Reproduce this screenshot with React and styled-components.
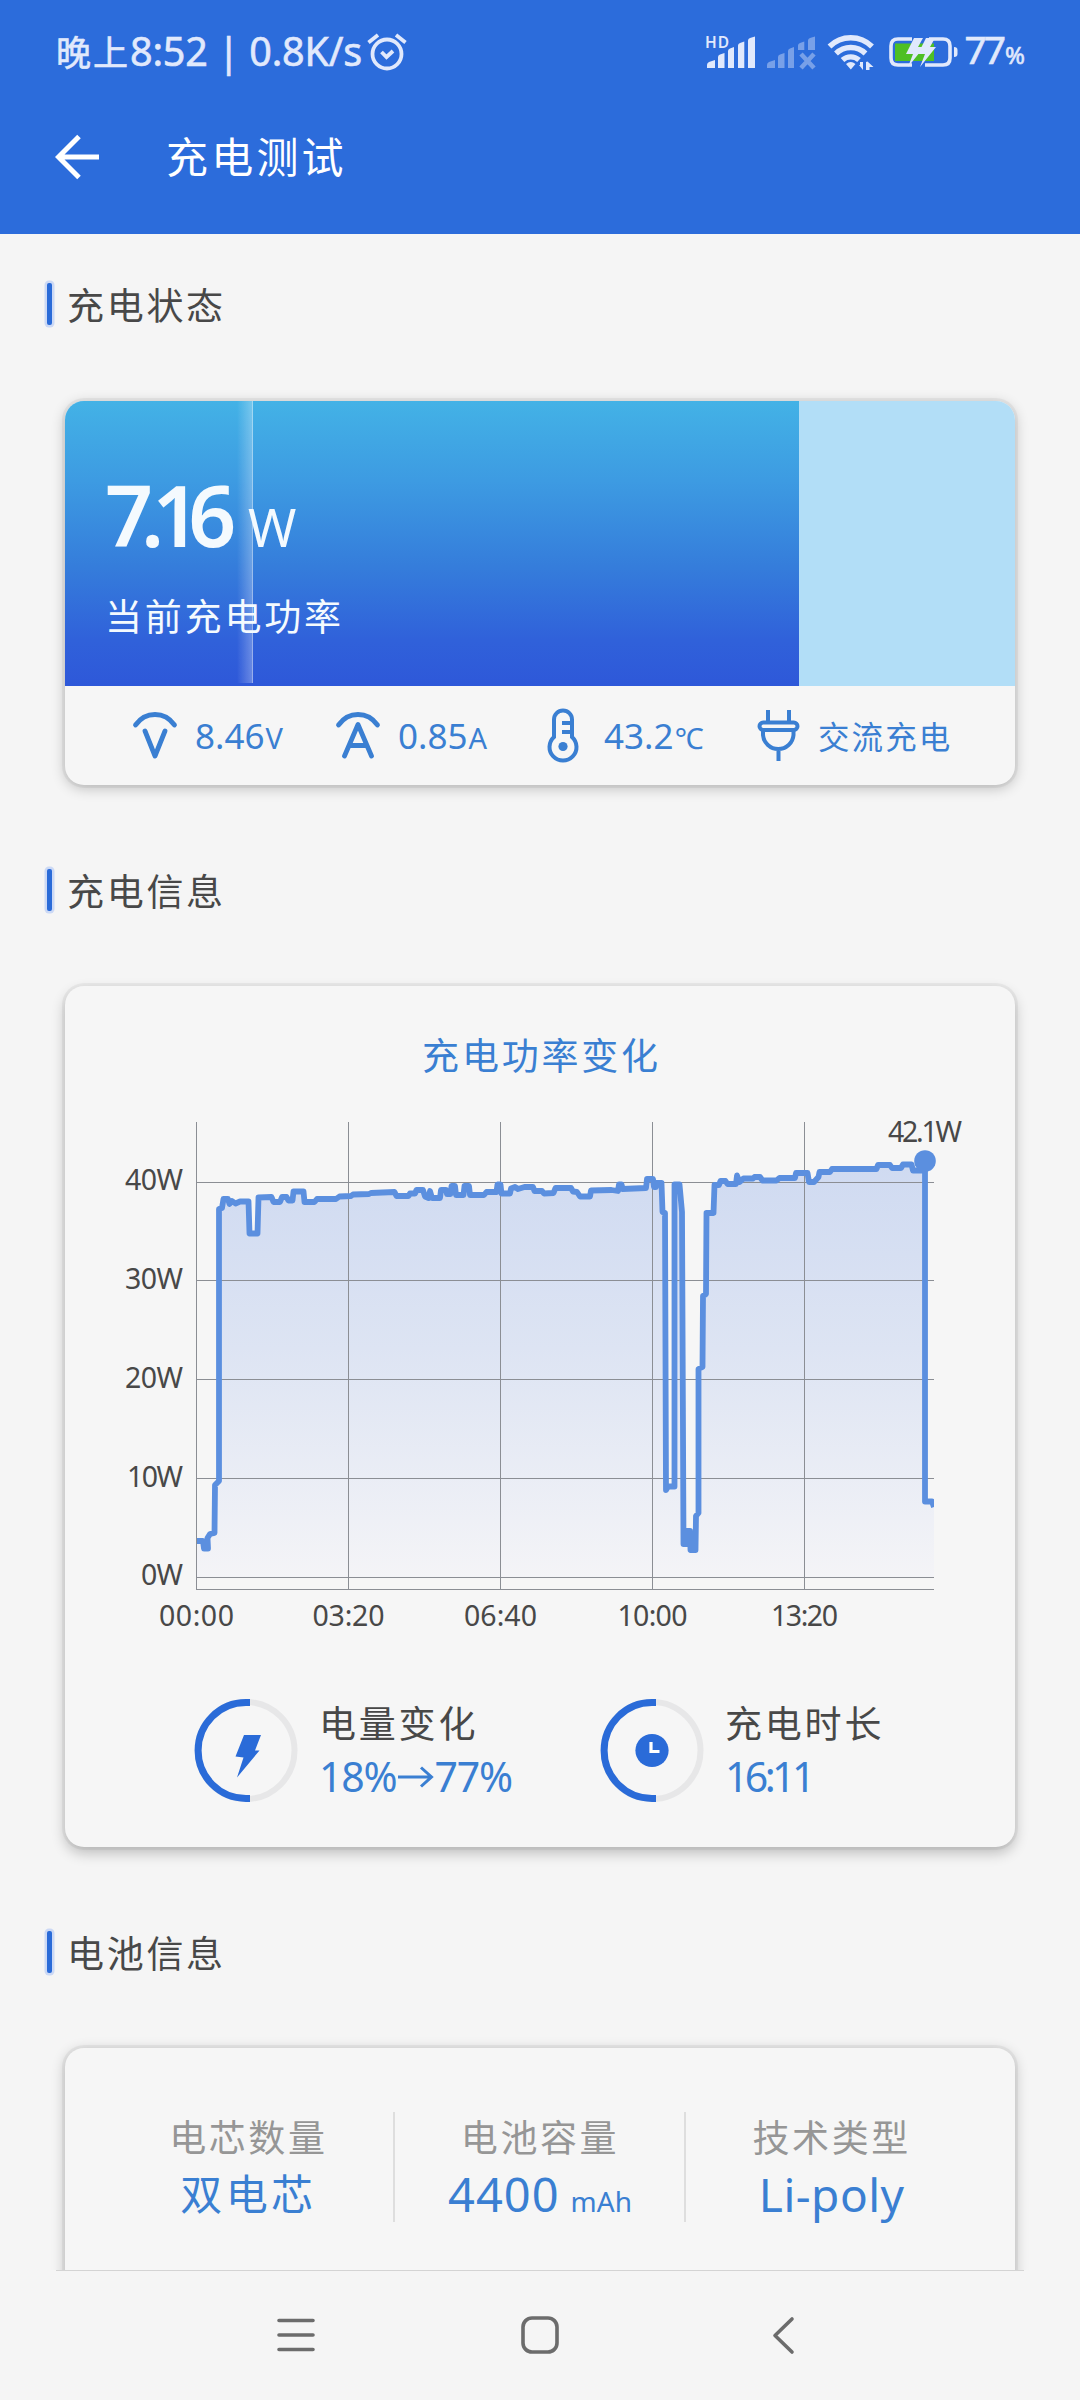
import React from 'react';
import styled, { createGlobalStyle } from 'styled-components';

const colors = {
  header: '#2c6cdb',
  page: '#f5f5f5',
  text: '#484848',
  muted: '#969696',
  value: '#3a7fd2',
  accent: '#2a6bd8',
  line: '#5b8fdf',
  status: '#e1e9fc'
};

const GlobalStyle = createGlobalStyle`
  body {
    margin: 0;
    background: ${colors.page};
    font-family: "Noto Sans", "Noto Sans CJK SC", sans-serif;
    font-weight: 400;
  }
`;

const Screen = styled.div`
  display: flex;
  flex-direction: column;
  width: 1080px;
  height: 2400px;
  overflow: hidden;
  background: ${colors.page};
`;

const Header = styled.header`
  height: 234px;
  flex: none;
  background: ${colors.header};
`;

const StatusBar = styled.div`
  display: flex;
  align-items: center;
  justify-content: space-between;
  height: 104px;
  padding: 0 55px 0 56px;
  color: ${colors.status};
`;

const StatusGroup = styled.div`
  display: flex;
  align-items: center;
`;

const Clock = styled.div`
  font-size: 39.5px;
  line-height: 52px;
  letter-spacing: -0.2px;
  white-space: pre;
  -webkit-text-stroke: 0.6px ${colors.status};
`;

const ClockDay = styled.span`
  font-size: 35px;
  letter-spacing: 2px;
`;

const StatusIcons = styled.svg`
  display: block;
  margin-right: 6px;
`;

const AlarmIcon = styled.svg`
  display: block;
  margin-left: 5px;
`;

const BatteryText = styled.div`
  display: flex;
  align-items: baseline;
  font-size: 39px;
  line-height: 52px;
  letter-spacing: -3px;
  -webkit-text-stroke: 0.6px ${colors.status};
`;

const BatteryUnit = styled.span`
  margin-left: 2px;
  font-size: 24px;
  letter-spacing: 0;
`;

const TitleBar = styled.div`
  display: flex;
  align-items: center;
  height: 106px;
  padding-left: 55px;
`;

const Title = styled.h1`
  margin: 0 0 0 65px;
  color: #fff;
  font-size: 42px;
  font-weight: 400;
  line-height: 60px;
  letter-spacing: 3.2px;
`;

const Main = styled.main`
  height: 2036px;
  flex: none;
  overflow: hidden;
  box-sizing: border-box;
  padding: 46px 65px 0;
`;

const SectionTitle = styled.h2`
  display: flex;
  align-items: center;
  height: 48px;
  margin: ${props => (props.$first ? '0 0 73px -18px' : '81px 0 72px -18px')};
  color: ${colors.text};
  font-size: 37px;
  font-weight: 400;
  line-height: 48px;
  letter-spacing: 2.7px;

  &::before {
    content: '';
    width: 5px;
    height: 42px;
    margin-right: 15px;
    border-radius: 2px;
    background: ${colors.accent};
    box-shadow: 0 0 0 2.5px #ccd9f5;
  }
`;

const SectionText = styled.span`
  padding-top: 3px;
`;

const Card = styled.section`
  height: ${props => props.height}px;
  box-sizing: border-box;
  overflow: hidden;
  border-radius: 19px;
  background: #f6f6f6;
  box-shadow: 0 0 0 3px rgba(0, 0, 0, 0.045), 0 ${props => props.$lift || 3}px 14px rgba(0, 0, 0, 0.24);
`;

const Gauge = styled.div`
  display: flex;
  height: 285px;
  background: #b2def7;
`;

const GaugeFill = styled.div`
  position: relative;
  box-sizing: border-box;
  padding: 64px 0 0 40px;
  color: #f4fafe;
  background: linear-gradient(#43b2e6 0%, #3d9be2 28%, #357ddb 58%, #3061da 84%, #2e58d9 100%);
`;

const Sheen = styled.i`
  position: absolute;
  left: 172px;
  top: 0;
  width: 16px;
  height: 282px;
  box-sizing: border-box;
  border-right: 1px solid rgba(255, 255, 255, 0.5);
  background: linear-gradient(90deg, rgba(255, 255, 255, 0), rgba(255, 255, 255, 0.28));
`;

const Power = styled.div`
  display: flex;
  align-items: baseline;
  position: relative;
  height: 100px;
  line-height: 100px;
`;

const PowerValue = styled.span`
  width: 140px;
  font-size: 84px;
  font-weight: 600;
  letter-spacing: -12px;
`;

const PowerUnit = styled.span`
  margin-left: 3px;
  font-size: 52px;
`;

const PowerLabel = styled.div`
  position: relative;
  margin-top: 25px;
  font-size: 37px;
  line-height: 54px;
  letter-spacing: 2.8px;
`;

const Stats = styled.div`
  display: flex;
  align-items: center;
  height: 98px;
  padding-left: 60px;
  color: ${colors.value};
`;

const Stat = styled.div`
  display: flex;
  align-items: center;
  width: ${props => props.width}px;
  font-size: 35px;
  line-height: 50px;
  white-space: nowrap;

  > span {
    padding-top: 3px;
  }
`;

const StatIcon = styled.svg`
  display: block;
  flex: none;
  margin-right: ${props => props.$gap || 10}px;
`;

const StatUnit = styled.span`
  margin-left: 1px;
  font-size: 29px;
`;

const StatText = styled.span`
  font-size: 31.5px;
  letter-spacing: 2.1px;
`;

const ChartTitle = styled.h3`
  margin: 0;
  padding: 44px 0 0 3px;
  color: ${colors.value};
  font-size: 37px;
  font-weight: 400;
  line-height: 52px;
  letter-spacing: 2.8px;
  text-align: center;
`;

const Chart = styled.svg`
  display: block;
  margin-top: 28px;
  font-size: 28.5px;
  fill: ${colors.text};
`;

const Summary = styled.div`
  display: flex;
  padding: 58px 0 0 129px;
`;

const SummaryItem = styled.div`
  display: flex;
  align-items: center;
  width: 406px;
`;

const SummaryText = styled.div`
  margin-left: 20px;
  height: 103px;
`;

const SummaryLabel = styled.div`
  color: ${colors.text};
  font-size: 37px;
  line-height: 50px;
  letter-spacing: 2.8px;
`;

const SummaryValue = styled.div`
  display: flex;
  align-items: center;
  color: ${colors.value};
  font-size: 41px;
  line-height: 54px;
  letter-spacing: ${props => props.$spacing};
`;

const Details = styled.div`
  display: flex;
  padding: 64px 38px 0;
`;

const Detail = styled.div`
  flex: 1;
  height: 110px;
  text-align: center;

  & + & {
    border-left: 2px solid #dedede;
    margin-left: -1px;
  }
`;

const DetailLabel = styled.div`
  color: ${colors.muted};
  font-size: 37px;
  line-height: 52px;
  letter-spacing: 2.6px;
`;

const DetailValue = styled.div`
  color: ${colors.value};
  font-size: ${props => props.size}px;
  line-height: 60px;
  letter-spacing: ${props => props.$spacing};
`;

const DetailUnit = styled.span`
  margin-left: 11px;
  font-size: 28px;
  letter-spacing: 0;
`;

const NavBar = styled.nav`
  display: flex;
  flex: 1;
  align-items: center;
  justify-content: center;
  gap: 200px;
  margin: 0 56px;
  padding-bottom: 1px;
  border-top: 1px solid #d4d4d4;
`;

const NavIcon = styled.svg`
  display: block;
  fill: none;
  stroke: #6c6c6c;
  stroke-width: 3.6;
  stroke-linecap: round;
  stroke-linejoin: round;
`;

const POWER_POINTS = [
  [197, 1541], [203, 1541], [204, 1548.5], [208, 1548.5], [207.5, 1538], [210, 1534], [214.5, 1533], [215, 1485],
  [219, 1481], [219, 1209], [222, 1208], [223.5, 1199], [228, 1199], [229.5, 1204], [232, 1201], [235.5, 1203.5],
  [240, 1201.5], [248.5, 1201.5], [249.5, 1233.5], [257.5, 1233.5], [258.5, 1197.5], [271.5, 1197], [273.5, 1202],
  [280, 1202], [282, 1197], [286.5, 1197], [288.5, 1200.5], [292.5, 1200.5], [293.5, 1191.5], [303.5, 1191.5],
  [304.5, 1202], [314.5, 1202], [317, 1199], [336, 1199], [339.5, 1196.5], [351, 1196], [353, 1194.5], [369, 1194],
  [371, 1193], [394.5, 1192], [396.5, 1196], [408.5, 1196], [410, 1193.5], [415, 1193.5], [416.5, 1190],
  [423, 1190], [425, 1196.5], [428.5, 1198], [430, 1191], [432, 1198], [440, 1198], [441, 1190], [446, 1190],
  [447, 1194], [450.5, 1194], [451.5, 1186], [455, 1186], [456, 1195], [463.5, 1195], [464.5, 1186], [469, 1186],
  [470, 1195], [484, 1195], [486.5, 1192], [496.5, 1192], [497.5, 1184.5], [500.5, 1184.5], [501.5, 1193.5],
  [510, 1193.5], [511, 1188.5], [515, 1187], [518, 1189], [524.5, 1187], [533, 1187], [534.5, 1191], [542, 1191],
  [544, 1193.5], [553.5, 1193], [555.5, 1188], [571, 1188], [573, 1191.5], [577, 1192], [580, 1196.5],
  [590, 1196.5], [591, 1190.5], [611.5, 1190], [618, 1191], [619, 1184.5], [621.5, 1184.5], [622.5, 1189],
  [646, 1188], [647, 1179], [653, 1179], [654, 1187], [656, 1187], [656.5, 1183], [661.5, 1183], [662.5, 1212],
  [665, 1213], [666, 1490], [668, 1486.5], [674.5, 1486.5], [674.5, 1184.5], [679.5, 1184.5], [682, 1212],
  [683.5, 1544], [686.5, 1544], [686.5, 1531], [690, 1531], [690.5, 1550], [695.5, 1550], [696, 1516],
  [698.5, 1513], [698.5, 1369], [702.5, 1367], [703, 1296], [706, 1294], [706.5, 1213], [713.5, 1213],
  [714.5, 1185], [719, 1185], [720.5, 1181], [725.5, 1181], [727.5, 1184], [736, 1184], [737, 1175.5],
  [739.5, 1182], [743.5, 1178.5], [753, 1178.5], [754.5, 1177], [760, 1177], [762.5, 1180.5], [776.5, 1180.5],
  [779.5, 1178], [795, 1178], [796, 1173], [807.5, 1173], [809, 1182], [814, 1182], [818.5, 1177], [819.5, 1172],
  [830, 1172], [832, 1169], [876.5, 1169], [878, 1165], [890, 1165], [892, 1168], [901, 1168], [903, 1164.5],
  [911.5, 1164.5], [913, 1170.5], [923, 1170.5], [925, 1162], [925, 1501.5], [932, 1501.5], [934, 1507]
];

const X_TICKS = [
  { label: '00:00', x: 196.5, width: 75 },
  { label: '03:20', x: 348.5, width: 72 },
  { label: '06:40', x: 500.5, width: 73 },
  { label: '10:00', x: 652.5, width: 70 },
  { label: '13:20', x: 804.5, width: 67 }
];

const Y_TICKS = [
  { label: '40W', y: 1182, width: 58 },
  { label: '30W', y: 1280.5, width: 58 },
  { label: '20W', y: 1379.5, width: 58 },
  { label: '10W', y: 1478.5, width: 56 },
  { label: '0W', y: 1577, width: 42 }
];

const PowerChart = () => {
  const line = 'M' + POWER_POINTS.map(p => p.join(' ')).join('L');

  return (
    <Chart width="950" height="530" viewBox="65 1110 950 530">
      <defs>
        <linearGradient id="area" x1="0" y1="1160" x2="0" y2="1577" gradientUnits="userSpaceOnUse">
          <stop offset="0" stopColor="#cfdaf1" />
          <stop offset="0.45" stopColor="#dde4f3" />
          <stop offset="1" stopColor="#f4f4f7" />
        </linearGradient>
        <clipPath id="plot">
          <rect x="196" y="1120" width="738" height="470" />
        </clipPath>
      </defs>
      <path d={`${line}V1577H197Z`} fill="url(#area)" clipPath="url(#plot)" />
      <g stroke="#8b8e94" strokeWidth="1">
        {X_TICKS.map(({ label, x }) => (
          <path key={label} d={`M${x} 1122V1590`} />
        ))}
        {Y_TICKS.map(({ label, y }) => (
          <path key={label} d={`M196 ${Math.floor(y) + 0.5}H934`} />
        ))}
        <path d="M196 1589.5H934" />
      </g>
      <path d={line} fill="none" stroke={colors.line} strokeWidth="5.8" strokeLinejoin="round" clipPath="url(#plot)" />
      <circle cx="925" cy="1161" r="10.8" fill={colors.line} />
      <text x="888" y="1142" textLength="74">42.1W</text>
      {X_TICKS.map(({ label, x, width }) => (
        <text key={label} x={x - width / 2} y="1625.5" textLength={width}>{label}</text>
      ))}
      {Y_TICKS.map(({ label, y, width }) => (
        <text key={label} x={183 - width} y={y + 8} textLength={width}>{label}</text>
      ))}
    </Chart>
  );
};

const Ring = ({ children }) => (
  <svg width="105" height="105" viewBox="0 0 105 105">
    <circle cx="52" cy="52.5" r="48.5" fill="none" stroke="#e7e7e8" strokeWidth="6" />
    <path d="M56 4.6H52A47.9 47.9 0 0 0 52 100.4H56" fill="none" stroke={colors.accent} strokeWidth="7" />
    {children}
  </svg>
);

const SignalIcons = () => (
  <StatusIcons width="254" height="44" viewBox="704 30 254 44" fill={colors.status}>
    <text x="705" y="48" fontSize="15.5" fontWeight="600" textLength="24">HD</text>
    <path d="M707 68v-3q0-2 2-3l6-2v8zM718 68V57q0-2 2-2.5l4.5-1.5v15zM728 68V51q0-2 2-2.5l4-1.5v21zM738 68V45.5q0-2 2-2.5l4.3-1.5V68zM748 68V40.5q0-2 2-2.5l5-1.5V68z" />
    <g opacity="0.42">
      <path d="M767 68v-3q0-2 2-3l6-2v8zM778 68V57q0-2 2-2.5l4.5-1.5v15zM788 68V51q0-2 2-2.5l4-1.5v21zM798 50v-4.5q0-2 2-2.5l4.3-1.5V50zM808 50v-9.5q0-2 2-2.5l5-1.5V50z" />
      <path d="M801 54l13 14M814 54l-13 14" stroke={colors.status} strokeWidth="4.5" />
    </g>
    <g fill="none" stroke={colors.status} strokeWidth="5.4">
      <path d="M829.5 46.5a30 30 0 0 1 42.500 0" />
      <path d="M836 53.5a21 21 0 0 1 29.500 0" />
      <path d="M842.5 60a12.5 12.5 0 0 1 16.500 0" />
    </g>
    <path d="M846 64q4.700-4 9.500 0l-4.700 5.500zM860 62h3v8l-4-5h1zM866 70v-8l1.500-0.500 6 5.500h-4v3z" />
    <path d="M912 39H898q-7 0-7 7v12q0 7 7 7h14M925 65h18q7 0 7-7V46q0-7-7-7h-14" fill="none" stroke={colors.status} strokeWidth="3.6" />
    <path d="M954 47q3.500 0 3.500 3v4q0 3-3.500 3z" />
    <path d="M895 43.500h39v17.500h-39z" fill="#4ebf24" />
    <path d="M914 38h9l-5 9h6l-16 20 5-13h-7zM926 38h9l-5 9h6l-16 20 5-13h-7z" />
  </StatusIcons>
);

const App = () => (
  <>
    <GlobalStyle />
    <Screen>
      <Header>
        <StatusBar>
          <StatusGroup>
            <Clock><ClockDay>晚上</ClockDay>8:52 | 0.8K/s</Clock>
            <AlarmIcon width="40" height="40" viewBox="0 0 40 40" fill="none" stroke={colors.status} strokeWidth="3.8">
              <circle cx="20" cy="22" r="14.5" />
              <path d="M14.5 20l5 5 6.500-6M1.500 10.500L11 3M38.500 10.500L29 3" />
            </AlarmIcon>
          </StatusGroup>
          <StatusGroup>
            <SignalIcons />
            <BatteryText>77<BatteryUnit>%</BatteryUnit></BatteryText>
          </StatusGroup>
        </StatusBar>
        <TitleBar>
          <svg width="46" height="46" viewBox="0 0 46 46" fill="none" stroke="#fff" strokeWidth="5">
            <path d="M44 23H5M24 2.5L3.5 23 24 43.5" />
          </svg>
          <Title>充电测试</Title>
        </TitleBar>
      </Header>

      <Main>
        <SectionTitle $first><SectionText>充电状态</SectionText></SectionTitle>
        <Card height={384}>
          <Gauge>
            <GaugeFill style={{ width: '77.25%' }}>
              <Sheen />
              <Power>
                <PowerValue>7.16</PowerValue>
                <PowerUnit>W</PowerUnit>
              </Power>
              <PowerLabel>当前充电功率</PowerLabel>
            </GaugeFill>
          </Gauge>
          <Stats>
            <Stat width={203}>
              <StatIcon width="60" height="56" viewBox="0 0 60 56" fill="none" stroke="currentColor" strokeWidth="4.8" strokeLinecap="round" strokeLinejoin="round">
                <path d="M10.5 18Q18 7.5 30 7.5T49.5 18M20 24L30 49 40 24" />
              </StatIcon>
              <span>8.46<StatUnit>V</StatUnit></span>
            </Stat>
            <Stat width={205}>
              <StatIcon width="60" height="56" viewBox="0 0 60 56" fill="none" stroke="currentColor" strokeWidth="4.8" strokeLinecap="round" strokeLinejoin="round">
                <path d="M10.5 18Q18 7.5 30 7.5T49.5 18M16.5 49L30 17.5 43.5 49M21 38.5H39" />
              </StatIcon>
              <span>0.85<StatUnit>A</StatUnit></span>
            </Stat>
            <Stat width={215}>
              <StatIcon $gap={11} width="60" height="56" viewBox="0 0 60 56" fill="none" stroke="currentColor" strokeWidth="4">
                <path d="M21 30V12.5a9 9 0 0 1 18 0V30A13.5 13.5 0 1 1 21 30zM29 16h9M29 25h9" />
                <circle cx="30" cy="39.5" r="4.6" fill="currentColor" stroke="none" />
              </StatIcon>
              <span>43.2<StatUnit>℃</StatUnit></span>
            </Stat>
            <Stat width={200}>
              <StatIcon width="60" height="56" viewBox="0 0 60 56" fill="none" stroke="currentColor" strokeWidth="4">
                <path d="M20 3v12M41 3v12M15 23v5a15.3 15.3 0 0 0 30.5 0v-5M30.5 44v10" />
                <rect x="11.5" y="15.5" width="38" height="7.5" rx="3.7" />
              </StatIcon>
              <StatText>交流充电</StatText>
            </Stat>
          </Stats>
        </Card>

        <SectionTitle><SectionText>充电信息</SectionText></SectionTitle>
        <Card height={861} $lift={6}>
          <ChartTitle>充电功率变化</ChartTitle>
          <PowerChart />
          <Summary>
            <SummaryItem>
              <Ring>
                <path d="M50 37h17l-6 15.500h4.500L43 79.500l6.500-20-8-1z" fill={colors.accent} />
              </Ring>
              <SummaryText>
                <SummaryLabel>电量变化</SummaryLabel>
                <SummaryValue $spacing="-1.2px">
                  18%
                  <svg width="38" height="26" viewBox="0 0 38 26" fill="none" stroke="currentColor" strokeWidth="3">
                    <path d="M2 14H35M25 4.5L35.5 14 25 23.5" />
                  </svg>
                  77%
                </SummaryValue>
              </SummaryText>
            </SummaryItem>
            <SummaryItem>
              <Ring>
                <circle cx="52" cy="52.5" r="16.6" fill={colors.accent} />
                <path d="M51 44v9.500h8.500" fill="none" stroke="#fff" strokeWidth="3.2" />
              </Ring>
              <SummaryText>
                <SummaryLabel>充电时长</SummaryLabel>
                <SummaryValue $spacing="-3.6px">16:11</SummaryValue>
              </SummaryText>
            </SummaryItem>
          </Summary>
        </Card>

        <SectionTitle><SectionText>电池信息</SectionText></SectionTitle>
        <Card height={400}>
          <Details>
            <Detail>
              <DetailLabel>电芯数量</DetailLabel>
              <DetailValue size={42} $spacing="3.4px">双电芯</DetailValue>
            </Detail>
            <Detail>
              <DetailLabel>电池容量</DetailLabel>
              <DetailValue size={47} $spacing="1px">4400<DetailUnit>mAh</DetailUnit></DetailValue>
            </Detail>
            <Detail>
              <DetailLabel>技术类型</DetailLabel>
              <DetailValue size={46} $spacing="0.5px">Li-poly</DetailValue>
            </Detail>
          </Details>
        </Card>
      </Main>

      <NavBar>
        <NavIcon width="44" height="44" viewBox="0 0 44 44">
          <path d="M5 7.5H39M5 22H39M5 36.5H39" />
        </NavIcon>
        <NavIcon width="44" height="44" viewBox="0 0 44 44">
          <rect x="5" y="5" width="34" height="34" rx="9" />
        </NavIcon>
        <NavIcon width="44" height="44" viewBox="0 0 44 44">
          <path d="M30 6L13 22.5 30 39" />
        </NavIcon>
      </NavBar>
    </Screen>
  </>
);

export default App;
